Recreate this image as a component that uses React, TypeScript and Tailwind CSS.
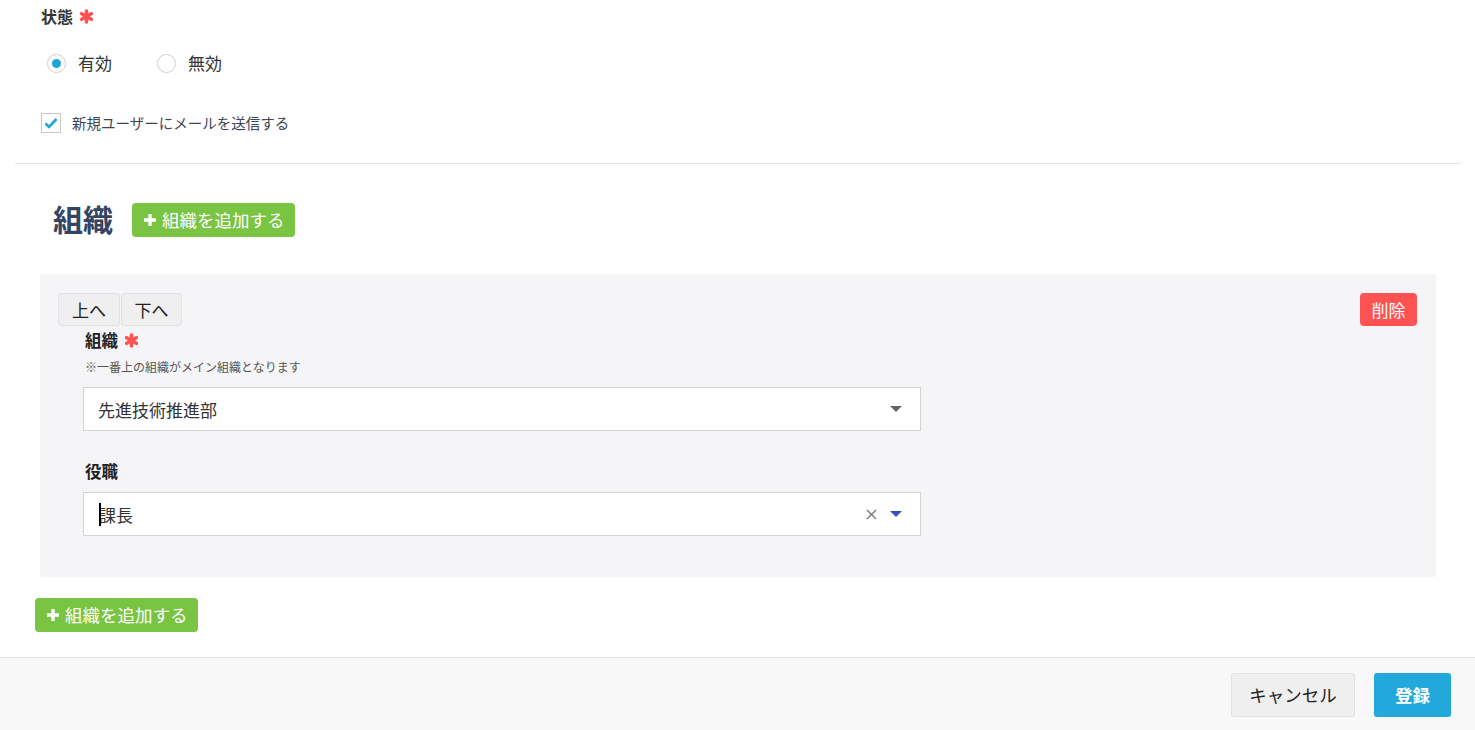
import React from "react";

const font = { fontFamily: '"Noto Sans CJK JP", "Noto Sans", sans-serif' };

function Asterisk() {
  return (
    <svg width="15" height="15" viewBox="0 0 15 15" className="inline-block">
      <g stroke="#ff5252" strokeWidth="3.6" strokeLinecap="round">
        <line x1="7.5" y1="2" x2="7.5" y2="13" />
        <line x1="2.7" y1="4.75" x2="12.3" y2="10.25" />
        <line x1="2.7" y1="10.25" x2="12.3" y2="4.75" />
      </g>
    </svg>
  );
}

function Plus() {
  return (
    <svg width="12" height="12" viewBox="0 0 12 12">
      <path d="M4.3 0h3.4v4.3H12v3.4H7.7V12H4.3V7.7H0V4.3h4.3z" fill="#fff" />
    </svg>
  );
}

function AddButton() {
  return (
    <button className="flex h-[34px] w-[163px] items-center gap-[6px] rounded-[4px] bg-[#7ac443] pl-[12px] text-[17.5px] leading-none text-white">
      <Plus />
      <span className="leading-none">組織を追加する</span>
    </button>
  );
}

function Caret({ color }: { color: string }) {
  return (
    <svg width="12" height="6" viewBox="0 0 12 6">
      <path d="M0 0h12L6 6z" fill={color} />
    </svg>
  );
}

export default function App() {
  return (
    <div className="flex min-h-[730px] w-[1475px] flex-col bg-white text-[#333]" style={font}>
      <div className="px-[41px] pt-[5px]">
        <div className="flex h-[22px] items-center gap-[6px] text-[16px] font-bold leading-[22px] text-[#333]">
          <span>状態</span>
          <Asterisk />
        </div>
        <div className="mt-[26px] flex h-[20px] items-center pl-[6px] text-[17px] leading-[20px]">
          <div className="flex items-center">
            <span className="flex h-[19px] w-[19px] items-center justify-center rounded-full border border-[#cfcfcf] bg-white">
              <span className="h-[9px] w-[9px] rounded-full bg-[#1ea6da]" />
            </span>
            <span className="ml-[12px] text-[#333]">有効</span>
          </div>
          <div className="ml-[45px] flex items-center">
            <span className="h-[19px] w-[19px] rounded-full border border-[#cfcfcf] bg-white" />
            <span className="ml-[12px] text-[#333]">無効</span>
          </div>
        </div>
        <div className="mt-[40px] flex h-[20px] items-center">
          <span className="flex h-[20px] w-[20px] items-center justify-center border border-[#c8c8c8] bg-white">
            <svg width="14" height="12" viewBox="0 0 14 12">
              <path d="M1.5 6.5l3.5 3.5L12.5 2" fill="none" stroke="#1ea6da" strokeWidth="2.6" />
            </svg>
          </span>
          <span className="ml-[11px] text-[14.5px] leading-[20px] text-[#3b4556]">新規ユーザーにメールを送信する</span>
        </div>
      </div>

      <div className="mx-[15px] mt-[30px] h-px w-[1446px] bg-[#e4e4e4]" />

      <div className="mt-[39px] flex h-[34px] items-start pl-[53px]">
        <h2 className="text-[30px] font-bold leading-[30px] text-[#344563]">組織</h2>
        <div className="ml-[19px]">
          <AddButton />
        </div>
      </div>

      <div className="mx-[40px] mt-[37px] h-[303px] w-[1396px] rounded-[3px] bg-[#f5f5f7] px-[18px] pt-[19px]">
        <div className="flex items-start justify-between">
          <div className="flex">
            <button className="h-[33px] w-[62px] rounded-[3px] border border-[#dfe1e6] bg-[#efefef] text-[17px] leading-none text-[#222]">上へ</button>
            <button className="ml-[1px] h-[33px] w-[61px] rounded-[3px] border border-[#dfe1e6] bg-[#efefef] text-[17px] leading-none text-[#222]">下へ</button>
          </div>
          <button className="mr-[1px] h-[33px] w-[57px] rounded-[4px] bg-[#ff5252] text-[17px] leading-none text-white">削除</button>
        </div>
        <div className="pl-[25px]">
          <div className="ml-[2px] mt-[4px] flex h-[20px] items-center gap-[6px] text-[16.5px] font-bold leading-[20px] text-[#222]">
            <span>組織</span>
            <Asterisk />
          </div>
          <div className="ml-[2px] mt-[9px] h-[16px] text-[12px] leading-[16px] text-[#555]">※一番上の組織がメイン組織となります</div>
          <div className="mt-[12px] flex h-[44px] w-[838px] items-center justify-between border border-[#d3d3d3] bg-white pl-[14px] pr-[18px] text-[17px] text-[#333]">
            <span className="leading-none">先進技術推進部</span>
            <Caret color="#666" />
          </div>
          <div className="ml-[2px] mt-[30px] h-[20px] text-[16.5px] font-bold leading-[20px] text-[#222]">役職</div>
          <div className="mt-[11px] flex h-[44px] w-[838px] items-center justify-between border border-[#d3d3d3] bg-white pl-[15px] pr-[18px] text-[17px] text-[#333]">
            <span className="relative leading-none">
              <span className="absolute -top-[3px] left-0 h-[23px] w-[2px] bg-black" />
              課長
            </span>
            <div className="flex items-center gap-[13px]">
              <svg width="11" height="11" viewBox="0 0 11 11">
                <path d="M1 1l9 9M10 1l-9 9" stroke="#777" strokeWidth="1.4" />
              </svg>
              <Caret color="#3b4fc4" />
            </div>
          </div>
        </div>
      </div>

      <div className="pl-[35px] pt-[21px]">
        <AddButton />
      </div>

      <div className="mt-[25px] flex flex-1 items-center justify-end gap-[19px] border-t border-[#e2e2e8] bg-[#f8f8f8] pr-[24px] pt-[1px]">
        <button className="h-[44px] w-[124px] rounded-[3px] border border-[#dfe1e6] bg-[#efefef] text-[17.5px] leading-none text-[#222]">キャンセル</button>
        <button className="h-[44px] w-[77px] rounded-[3px] bg-[#22a8da] text-[17.5px] font-bold leading-none text-white">登録</button>
      </div>
    </div>
  );
}
